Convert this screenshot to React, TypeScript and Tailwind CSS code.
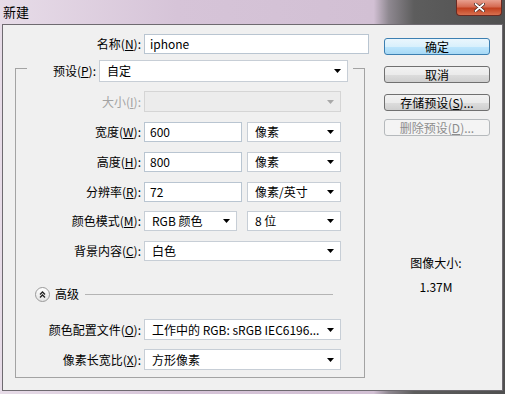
import React from "react";

const Arrow = ({ disabled }: { disabled?: boolean }) => (
  <svg width="7" height="4" viewBox="0 0 7 4" className="shrink-0">
    <path d="M0 0H7L3.5 4Z" fill={disabled ? "#a9a9a9" : "#000"} />
  </svg>
);

function Select({ text, className, disabled }: { text?: string; className: string; disabled?: boolean }) {
  return (
    <div
      className={`flex items-center justify-between border pl-[7px] pr-[6px] ${
        disabled ? "border-[#d5d5d5] bg-[#ececec]" : "border-[#c7ced6] bg-white"
      } ${className}`}
    >
      <span className="whitespace-nowrap">{text}</span>
      <Arrow disabled={disabled} />
    </div>
  );
}

function Input({ text, className }: { text: string; className: string }) {
  return (
    <div className={`flex items-center border border-[#b9c5d1] bg-white pl-[5px] ${className}`}>
      <span>{text}</span>
    </div>
  );
}

function Label({ children, className, disabled }: { children: React.ReactNode; className: string; disabled?: boolean }) {
  return (
    <div className={`shrink-0 whitespace-nowrap text-right pr-[1px] ${disabled ? "text-[#a3a3a3]" : "text-black"} ${className}`}>
      {children}
    </div>
  );
}

function Btn({ children, className, primary, disabled }: { children: React.ReactNode; className: string; primary?: boolean; disabled?: boolean }) {
  const look = disabled
    ? "border-[#b5b9bc] bg-[#f4f4f4] text-[#8d8d8d]"
    : primary
    ? "border-[#3c7fb1] bg-[linear-gradient(180deg,#eaf6fd_0%,#d9f0fc_50%,#bee6fd_51%,#a7d9f5_100%)] text-black"
    : "border-[#707070] bg-[linear-gradient(180deg,#f2f2f2_0%,#ebebeb_50%,#dddddd_51%,#cfcfcf_100%)] text-black";
  return (
    <div className={`flex h-[17px] w-[106px] items-center justify-center rounded-[3px] border ${look} ${className}`}>
      <span className="whitespace-nowrap leading-none">{children}</span>
    </div>
  );
}

export default function App() {
  return (
    <div className="flex h-[394px] w-[505px] flex-col overflow-hidden bg-[linear-gradient(90deg,#e7dce8_0%,#d6c4d8_35%,#d2c0d4_74%,#8e8890_77%,#5d5d5d_82%,#505050_100%)] font-['Noto_Sans_CJK_SC','Noto_Sans',sans-serif] text-[12px] leading-[16px] text-black">
      {/* title bar */}
      <div className="flex h-[24px] shrink-0 items-start justify-between">
        <div className="pl-[3px] pt-[3px] text-[13px] leading-[17px] text-black">新建</div>
        <div className="mr-[3px] flex h-[16px] w-[46px] items-center justify-center rounded-b-[4px] border border-t-0 border-[#6b2a22] bg-[linear-gradient(180deg,#e8a08f_0%,#d56b52_45%,#c2401f_55%,#d8704f_100%)]">
          <svg width="11" height="9" viewBox="0 0 11 9">
            <path d="M1.5 1L9.5 8M9.5 1L1.5 8" stroke="#3a1a14" strokeWidth="3" strokeLinecap="round" />
            <path d="M1.5 1L9.5 8M9.5 1L1.5 8" stroke="#fff" strokeWidth="1.8" strokeLinecap="round" />
          </svg>
        </div>
      </div>

      {/* client */}
      <div className="mx-[2px] mb-[3px] flex flex-1 border border-[#6e6a70] bg-[#f0f0f0]">
        {/* left column */}
        <div className="flex w-[367px] shrink-0 flex-col">
          {/* name */}
          <div className="mt-[9px] flex items-center">
            <Label className="w-[139px]">名称(<u>N</u>):</Label>
            <Input text="iphone" className="ml-[2px] h-[20px] w-[225px]" />
          </div>

          {/* group box */}
          <div className="ml-[12px] mt-[14px] flex h-[310px] w-[350px] flex-col border border-[#a3a3a3]">
            {/* legend row */}
            <div className="mx-[11px] -mt-[9px] flex items-center bg-[#f0f0f0]">
              <Label className="w-[70px]">预设(<u>P</u>):</Label>
              <Select text="自定" className="ml-[2px] h-[22px] w-[249px]" />
            </div>

            <div className="mt-[9px] flex items-center">
              <Label disabled className="w-[126px]">大小(<u>I</u>):</Label>
              <Select disabled className="ml-[2px] h-[21px] w-[197px]" />
            </div>

            <div className="mt-[10px] flex items-center">
              <Label className="w-[126px]">宽度(<u>W</u>):</Label>
              <Input text="600" className="ml-[2px] h-[20px] w-[98px]" />
              <Select text="像素" className="ml-[5px] h-[20px] w-[94px]" />
            </div>

            <div className="mt-[10px] flex items-center">
              <Label className="w-[126px]">高度(<u>H</u>):</Label>
              <Input text="800" className="ml-[2px] h-[20px] w-[98px]" />
              <Select text="像素" className="ml-[5px] h-[20px] w-[94px]" />
            </div>

            <div className="mt-[10px] flex items-center">
              <Label className="w-[126px]">分辨率(<u>R</u>):</Label>
              <Input text="72" className="ml-[2px] h-[20px] w-[98px]" />
              <Select text="像素/英寸" className="ml-[5px] h-[20px] w-[94px]" />
            </div>

            <div className="mt-[9px] flex items-center">
              <Label className="w-[126px]">颜色模式(<u>M</u>):</Label>
              <Select text="RGB 颜色" className="ml-[2px] h-[20px] w-[93px]" />
              <Select text="8 位" className="ml-[10px] h-[20px] w-[94px]" />
            </div>

            <div className="mt-[10px] flex items-center">
              <Label className="w-[126px]">背景内容(<u>C</u>):</Label>
              <Select text="白色" className="ml-[2px] h-[20px] w-[197px]" />
            </div>

            {/* advanced */}
            <div className="mt-[25px] flex h-[16px] items-center">
              <div className="ml-[19px] flex h-[15px] w-[15px] items-center justify-center rounded-full border border-[#9a9a9a] bg-[linear-gradient(180deg,#ffffff_0%,#e4e4e4_100%)]">
                <svg width="7" height="7" viewBox="0 0 7 7">
                  <path d="M1 3.5L3.5 1L6 3.5M1 6.5L3.5 4L6 6.5" stroke="#222" strokeWidth="1.3" fill="none" />
                </svg>
              </div>
              <span className="ml-[5px]">高级</span>
              <div className="ml-[6px] mr-[31px] h-px flex-1 bg-[#b4b4b4]" />
            </div>

            <div className="mt-[17px] flex items-center">
              <Label className="w-[126px]">颜色配置文件(<u>O</u>):</Label>
              <Select text="工作中的 RGB: sRGB IEC6196..." className="ml-[2px] h-[21px] w-[197px]" />
            </div>

            <div className="mt-[9px] flex items-center">
              <Label className="w-[126px]">像素长宽比(<u>X</u>):</Label>
              <Select text="方形像素" className="ml-[2px] h-[21px] w-[197px]" />
            </div>
          </div>
        </div>

        {/* right column */}
        <div className="flex flex-1 flex-col">
          <Btn primary className="ml-[14px] mt-[13px]">确定</Btn>
          <Btn className="ml-[14px] mt-[11px]">取消</Btn>
          <Btn className="ml-[14px] mt-[11px]">存储预设(<u>S</u>)...</Btn>
          <Btn disabled className="ml-[14px] mt-[8px]">删除预设(<u>D</u>)...</Btn>
          <div className="mt-[119px] text-center">图像大小:</div>
          <div className="mt-[8px] text-center">1.37M</div>
        </div>
      </div>
    </div>
  );
}
